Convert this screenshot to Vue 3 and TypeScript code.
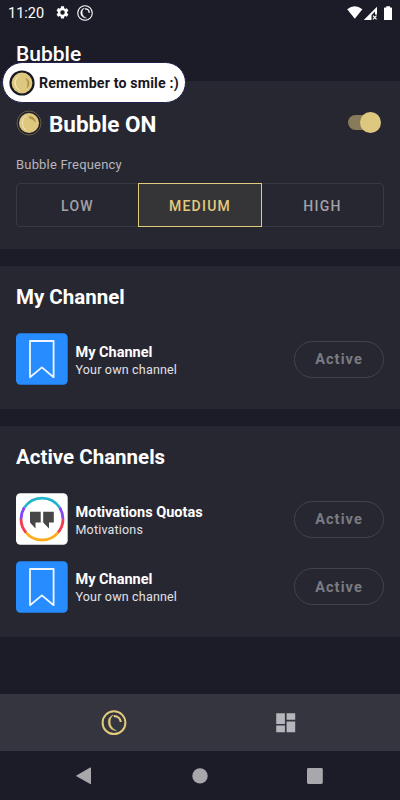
<script setup lang="ts">
import { ref } from 'vue'

interface Channel {
  name: string
  description: string
  kind: 'bookmark' | 'quote'
}

interface ChannelGroup {
  title: string
  channels: Channel[]
}

const own: Channel = { name: 'My Channel', description: 'Your own channel', kind: 'bookmark' }
const groups: ChannelGroup[] = [
  { title: 'My Channel', channels: [own] },
  {
    title: 'Active Channels',
    channels: [{ name: 'Motivations Quotas', description: 'Motivations', kind: 'quote' }, own],
  },
]

const frequencies = ['LOW', 'MEDIUM', 'HIGH'] as const
const frequency = ref<(typeof frequencies)[number]>('MEDIUM')
const enabled = ref(true)
</script>

<template>
  <div class="screen">
    <header class="top">
      <div class="status">
        <span class="clock">11:20</span>
        <svg class="gear" viewBox="0 0 24 24">
          <path fill="#fff" d="M19.14 12.94c.04-.3.06-.61.06-.94s-.02-.64-.07-.94l2.03-1.58c.18-.14.23-.41.12-.61l-1.92-3.32c-.12-.22-.37-.29-.59-.22l-2.39.96c-.5-.38-1.03-.7-1.62-.94l-.36-2.54A.48.48 0 0 0 13.92 2h-3.84c-.24 0-.43.17-.47.41l-.36 2.54c-.59.24-1.13.57-1.62.94l-2.39-.96c-.22-.08-.47 0-.59.22L2.74 8.87c-.12.21-.08.47.12.61l2.03 1.58c-.05.3-.09.63-.09.94s.02.64.07.94l-2.03 1.58c-.18.14-.23.41-.12.61l1.92 3.32c.12.22.37.29.59.22l2.39-.96c.5.38 1.03.7 1.62.94l.36 2.54c.05.24.24.41.48.41h3.84c.24 0 .44-.17.47-.41l.36-2.54c.59-.24 1.13-.56 1.62-.94l2.39.96c.22.08.47 0 .59-.22l1.92-3.32c.12-.22.07-.47-.12-.61l-2.01-1.58zM12 15.6A3.6 3.6 0 1 1 12 8.4a3.6 3.6 0 0 1 0 7.2z" />
        </svg>
        <svg class="ring" viewBox="0 0 26 26" fill="none" stroke="#fff">
          <circle cx="13" cy="13" r="11.8" stroke-width="1.8" />
          <path d="M12 5A8.2 8.2 0 0 0 15.5 21A9 9 0 0 1 12 5Z" fill="#fff" stroke-width=".6" />
          <path d="M12.8 6.2C17 6 19.8 9 20 12.8" stroke-width="2.2" />
        </svg>
        <svg class="signals" viewBox="0 0 46 15" fill="#fff">
          <path d="M.2 3.2Q7.6-2.8 15.4 3.2L7.8 12.8Z" />
          <path d="M16.8 14L30 .8V8.5H28V5.6L24.5 9V14Z" />
          <path d="M26 9.7L29.5 13.4M29.5 9.7L26 13.4" fill="none" stroke="#fff" stroke-width="1.2" />
          <path d="M37.8 1.5H39.3V.3H43V1.5H44.6Q45 1.5 45 2V13.5Q45 14 44.5 14H37.5Q37 14 37 13.5V2Q37 1.5 37.8 1.5Z" />
        </svg>
      </div>
      <h1 class="title">Bubble</h1>
    </header>

    <section class="panel control">
      <div class="power">
        <svg class="coin" viewBox="0 0 26 26">
          <circle cx="13" cy="13" r="12" fill="#20202a" stroke="#827552" stroke-width=".7" />
          <circle cx="13" cy="13" r="10" fill="#dec880" />
          <path d="M11.5 5.2A8.2 8.2 0 0 0 12.5 21A8.7 8.7 0 0 1 11.5 5.2Z" fill="#f3e7ba" />
          <path d="M13.3 6.6Q18.5 6.6 19.6 12.2Q17.2 8.8 13.3 8Z" fill="#a98d45" stroke="#a98d45" stroke-width=".5" />
        </svg>
        <h2 class="power-label">Bubble ON</h2>
        <button class="switch" :class="{ on: enabled }" @click="enabled = !enabled"></button>
      </div>
      <div class="label">Bubble Frequency</div>
      <div class="segments">
        <button
          v-for="item in frequencies"
          :key="item"
          class="segment"
          :class="{ selected: item === frequency }"
          @click="frequency = item"
        >{{ item }}</button>
      </div>
    </section>

    <section v-for="group in groups" :key="group.title" class="panel group">
      <h2 class="heading">{{ group.title }}</h2>
      <div class="list">
        <div v-for="channel in group.channels" :key="channel.name" class="row">
          <svg v-if="channel.kind === 'bookmark'" class="thumb" viewBox="0 0 52 52">
            <rect y=".3" width="51.7" height="51.5" rx="4.5" fill="#268cff" />
            <path d="M14 8H37.6V44.2L25.9 34.4L14 44.2Z" fill="none" stroke="#eef5ff" stroke-width="1.8" stroke-linejoin="round" />
          </svg>
          <svg v-else class="thumb" viewBox="0 0 52 52">
            <rect y=".3" width="51.7" height="51.5" rx="4.5" fill="#fff" />
            <g fill="none" stroke-width="2.8">
              <path d="M8.4 14.6A21 21 0 0 1 43.6 14.6" stroke="#20b5cc" />
              <path d="M43.6 14.6A21 21 0 0 1 47 26" stroke="#8348f4" />
              <path d="M47 26A21 21 0 0 1 42 39.6" stroke="#f23b4c" />
              <path d="M42 39.6A21 21 0 0 1 10 39.6" stroke="#fcac1c" />
              <path d="M10 39.6A21 21 0 0 1 5 26" stroke="#f23b4c" />
              <path d="M5 26A21 21 0 0 1 8.4 14.6" stroke="#8348f4" />
            </g>
            <path d="M14 18.8H24.7V29.5H19.5V35.5L14 29.5ZM27.2 18.8H37.8V29.5H33V35.5L27.2 29.5Z" fill="#474747" />
          </svg>
          <div class="copy">
            <div class="name">{{ channel.name }}</div>
            <div class="description">{{ channel.description }}</div>
          </div>
          <button class="pill">Active</button>
        </div>
      </div>
    </section>

    <nav class="tabs">
      <div class="tab">
        <svg class="tab-icon" viewBox="0 0 26 26" fill="none" stroke="#e3cb7d">
          <circle cx="13" cy="12.7" r="11.4" stroke-width="2" />
          <path d="M12 5A8.2 8.2 0 0 0 15.3 20.6A9.4 9.4 0 0 1 12 5Z" fill="#e3cb7d" stroke-width=".5" />
          <path d="M12.7 6.2C16.8 6 19.4 8.5 19.8 12" stroke-width="2.2" />
        </svg>
      </div>
      <div class="tab">
        <svg class="tab-icon" viewBox="0 0 26 26" fill="#b5b5bb">
          <path d="M3.2 3.2H11.9V14H3.2ZM13.6 3.2H22.2V9.8H13.6ZM3.2 15.6H11.9V22.2H3.2ZM13.6 11.6H22.2V22.2H13.6Z" />
        </svg>
      </div>
    </nav>

    <footer class="system">
      <svg viewBox="0 0 18 18" fill="#a8a8ac"><path d="M1 8.7L15.2.6Q16 .3 16 1.1V16.5Q16 17.3 15.2 16.9L1 9.1Z" /></svg>
      <svg viewBox="0 0 18 18" fill="#a8a8ac"><circle cx="9" cy="8.9" r="7.7" /></svg>
      <svg viewBox="0 0 18 18" fill="#a8a8ac"><rect x="1" y="1.1" width="15.8" height="15.8" rx="1.4" /></svg>
    </footer>

    <aside class="bubble">
      <svg class="coin" viewBox="0 0 26 26">
        <circle cx="13" cy="13" r="12.6" fill="#171823" />
        <circle cx="13" cy="13" r="10.4" fill="#dec880" />
        <path d="M12 5A8.2 8.2 0 0 0 13 21.2A8.7 8.7 0 0 1 12 5Z" fill="#f3e7ba" />
        <path d="M17.2 8.3Q22.4 12.5 18.2 17.8Q20 12.8 17.2 8.3Z" fill="#a98d45" stroke="#a98d45" stroke-width=".6" />
      </svg>
      <span class="message">Remember to smile :)</span>
    </aside>
  </div>
</template>

<style>
body {
  margin: 0;
  background: #1c1c28;
}
</style>

<style scoped>
.screen {
  position: relative;
  display: flex;
  flex-direction: column;
  width: 400px;
  height: 800px;
  overflow: hidden;
  background: #1c1c28;
  color: #fff;
  font-family: Roboto, sans-serif;
}
.screen * {
  box-sizing: border-box;
}
h1,
h2 {
  margin: 0;
}
button {
  padding: 0;
  border: 0;
  background: none;
  font-family: inherit;
}
svg {
  display: block;
  flex: none;
}
.top {
  height: 81px;
  flex: none;
}
.status {
  display: flex;
  align-items: center;
  height: 25px;
  padding: 0 7px 0 8px;
}
.clock {
  width: 46px;
  padding-top: 2px;
  font-size: 14.5px;
  line-height: 25px;
}
.gear {
  width: 15px;
  height: 15px;
  margin-left: 1px;
}
.ring {
  width: 16px;
  height: 16px;
  margin-left: 7px;
}
.signals {
  width: 46px;
  height: 15px;
  margin-left: auto;
  margin-top: 1px;
}
.title {
  padding: 16px 16px 0;
  font-size: 21px;
  line-height: 26px;
  font-weight: 500;
}
.panel {
  flex: none;
  padding: 0 16px;
  background: #272732;
}
.control {
  height: 168px;
  padding-top: 26px;
}
.power {
  display: flex;
  align-items: center;
  height: 32px;
}
.coin {
  width: 26px;
  height: 26px;
}
.power .coin {
  margin-left: -0.5px;
  margin-top: -1px;
}
.power-label {
  flex: 1;
  margin-left: 7.5px;
  padding-top: 2px;
  font-size: 22.5px;
  line-height: 30px;
  font-weight: 700;
}
.switch {
  display: flex;
  align-items: center;
  width: 30px;
  height: 15px;
  margin-right: 6px;
  margin-top: -2px;
  border-radius: 8px;
  background: #4a4a55;
}
.switch::after {
  content: '';
  width: 21px;
  height: 21px;
  flex: none;
  border-radius: 50%;
  background: #a8a8ac;
}
.switch.on {
  background: #877b59;
}
.switch.on::after {
  margin-left: 11.5px;
  background: #dec880;
}
.label {
  padding-top: 17px;
  color: #b5b5ba;
  font-size: 13px;
  line-height: 18px;
  letter-spacing: 0.18px;
}
.segments {
  display: flex;
  height: 44px;
  margin-top: 9px;
  border: 1px solid #393944;
  border-radius: 4px;
}
.segment {
  flex: 1;
  padding-top: 2px;
  color: #a2a2a8;
  font-size: 14px;
  font-weight: 500;
  letter-spacing: 1.25px;
}
.segment.selected {
  flex: 0 0 124px;
  margin: -1px 0;
  border: 1px solid #e3cb7d;
  background: #353538;
  color: #e3cb7d;
}
.group {
  margin-top: 16.5px;
  padding-top: 18px;
  padding-bottom: 24px;
}
.heading {
  font-size: 20.5px;
  line-height: 26px;
  font-weight: 700;
}
.list {
  display: flex;
  flex-direction: column;
  gap: 15.5px;
  padding-top: 23.5px;
}
.row {
  display: flex;
  align-items: center;
  height: 52px;
}
.thumb {
  width: 52px;
  height: 52px;
}
.copy {
  flex: 1;
  margin-left: 7.5px;
  padding-top: 3px;
}
.name {
  font-size: 14.5px;
  line-height: 18px;
  font-weight: 700;
}
.description {
  color: #e2e2e5;
  font-size: 12.5px;
  line-height: 16px;
  letter-spacing: 0.18px;
}
.pill {
  width: 90px;
  height: 37px;
  padding-top: 1px;
  border: 1px solid #43434e;
  border-radius: 19px;
  color: #7b7b82;
  font-size: 14.5px;
  font-weight: 700;
  letter-spacing: 1.1px;
}
.tabs {
  display: flex;
  flex: none;
  height: 57px;
  margin-top: auto;
  padding: 0 28px;
  background: #353540;
}
.tab {
  display: flex;
  flex: 1;
  align-items: center;
  justify-content: center;
}
.tab-icon {
  width: 26px;
  height: 26px;
}
.system {
  display: flex;
  flex: none;
  align-items: center;
  justify-content: space-between;
  height: 49px;
  padding: 0 76px 0 75px;
}
.system svg {
  width: 18px;
  height: 18px;
}
.bubble {
  position: absolute;
  top: 62px;
  left: 2px;
  display: flex;
  align-items: center;
  width: 184px;
  height: 41px;
  padding-left: 6px;
  border: 1px solid #22214f;
  border-radius: 21px;
  background: #fff;
}
.message {
  margin-left: 4px;
  color: #17171c;
  font-size: 14.2px;
  line-height: 20px;
  font-weight: 700;
  letter-spacing: 0.15px;
  white-space: nowrap;
}
</style>
